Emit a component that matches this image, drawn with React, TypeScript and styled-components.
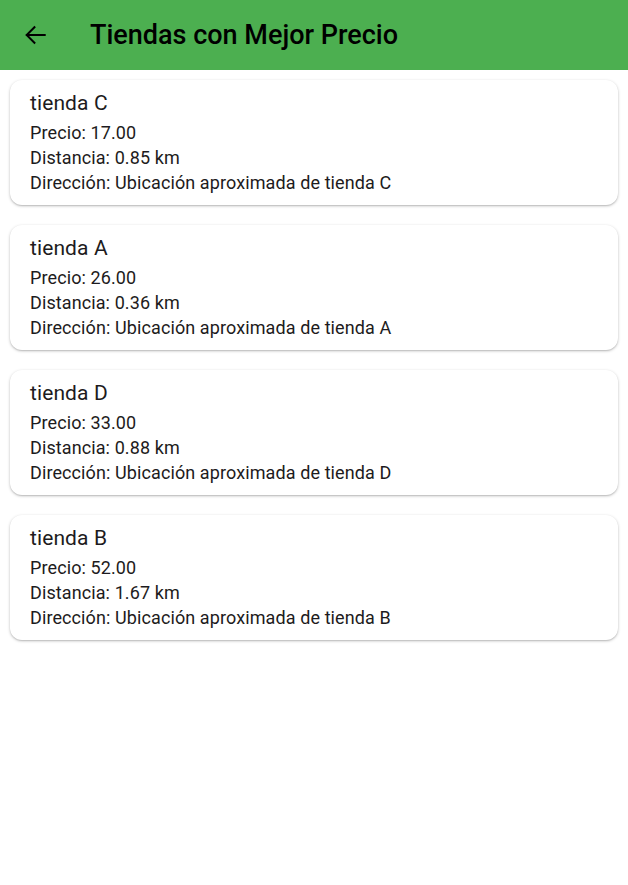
import React from "react";
import styled, { createGlobalStyle } from "styled-components";

const Global = createGlobalStyle`
  html, body { margin: 0; padding: 0; background: #ffffff; }
  body { font-family: Roboto, "Noto Sans", sans-serif; }
`;

const Page = styled.div`
  width: 628px;
  min-height: 885px;
  background: #ffffff;
`;

const AppBar = styled.header`
  height: 70px;
  background: #4caf50;
  display: flex;
  align-items: center;
  padding: 0 0 0 15px;
  box-sizing: border-box;
`;

const BackButton = styled.button`
  width: 40px;
  height: 40px;
  border: none;
  background: transparent;
  padding: 0;
  display: flex;
  align-items: center;
  justify-content: center;
  color: #000;
  margin-right: 35px;
`;

const Title = styled.h1`
  margin: 0;
  font-family: Roboto, sans-serif;
  font-weight: 500;
  font-size: 27px;
  color: #000;
  letter-spacing: 0;
`;

const List = styled.main`
  display: flex;
  flex-direction: column;
  gap: 20px;
  padding: 10px;
`;

const Card = styled.section`
  background: #fff;
  border-radius: 12px;
  padding: 10px 20px;
  box-shadow: 0 1px 3px rgba(0, 0, 0, 0.25), 0 1px 1px rgba(0, 0, 0, 0.08);
  display: flex;
  flex-direction: column;
`;

const StoreName = styled.div`
  font-size: 21px;
  line-height: 26px;
  color: #1d1b20;
  margin-bottom: 4px;
  letter-spacing: 0.1px;
`;

const Line = styled.div`
  font-size: 18px;
  line-height: 25px;
  color: #1d1b20;
  letter-spacing: 0.1px;
`;

const stores = [
  { name: "tienda C", price: "17.00", dist: "0.85" },
  { name: "tienda A", price: "26.00", dist: "0.36" },
  { name: "tienda D", price: "33.00", dist: "0.88" },
  { name: "tienda B", price: "52.00", dist: "1.67" },
];

export default function App() {
  return (
    <Page>
      <Global />
      <AppBar>
        <BackButton aria-label="Atrás">
          <svg width="26" height="26" viewBox="0 0 24 24" fill="none" stroke="#000" strokeWidth="1.8" strokeLinecap="square">
            <path d="M21 12H4.5" />
            <path d="M11.5 4.8L4.3 12l7.2 7.2" />
          </svg>
        </BackButton>
        <Title>Tiendas con Mejor Precio</Title>
      </AppBar>
      <List>
        {stores.map((s) => (
          <Card key={s.name}>
            <StoreName>{s.name}</StoreName>
            <Line>Precio: {s.price}</Line>
            <Line>Distancia: {s.dist} km</Line>
            <Line>Dirección: Ubicación aproximada de {s.name}</Line>
          </Card>
        ))}
      </List>
    </Page>
  );
}
